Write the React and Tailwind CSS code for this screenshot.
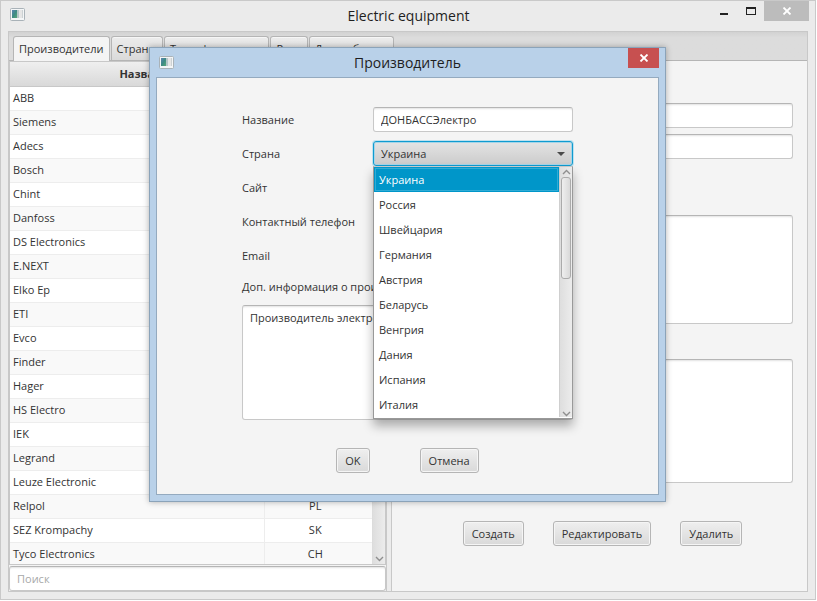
import React from "react";

const TABS = ["Производители", "Страны", "Трансформаторы", "Реле", "Доп. таблицы"];

const MAKERS = [
  ["ABB", "CH"],
  ["Siemens", "DE"],
  ["Adecs", "UA"],
  ["Bosch", "DE"],
  ["Chint", "CN"],
  ["Danfoss", "DK"],
  ["DS Electronics", "UA"],
  ["E.NEXT", "UA"],
  ["Elko Ep", "CZ"],
  ["ETI", "SI"],
  ["Evco", "IT"],
  ["Finder", "IT"],
  ["Hager", "DE"],
  ["HS Electro", "UA"],
  ["IEK", "RU"],
  ["Legrand", "FR"],
  ["Leuze Electronic", "DE"],
  ["Relpol", "PL"],
  ["SEZ Krompachy", "SK"],
  ["Tyco Electronics", "CH"],
];

const COUNTRIES = [
  "Украина",
  "Россия",
  "Швейцария",
  "Германия",
  "Австрия",
  "Беларусь",
  "Венгрия",
  "Дания",
  "Испания",
  "Италия",
];

const FIELD =
  "block w-full rounded-[3px] border border-[#c8c8c8] border-t-[#b5b5b5] bg-white px-[7px] shadow-[inset_0_2px_2px_-1px_#e2e2e2] outline-none placeholder:text-[#a8a8a8]";

function AppIcon() {
  return (
    <svg width="16" height="14" viewBox="0 0 16 14" className="block" aria-hidden="true">
      <defs>
        <linearGradient id="pane" x1="0" y1="0" x2="1" y2="1">
          <stop offset="0" stopColor="#5d84b4" />
          <stop offset="0.5" stopColor="#3d8a84" />
          <stop offset="1" stopColor="#58a878" />
        </linearGradient>
      </defs>
      <rect x="0.5" y="0.5" width="14" height="12" rx="1" fill="#f4f6f7" stroke="#a9b2b8" />
      <rect x="2" y="2" width="5" height="8" fill="url(#pane)" />
      <rect x="7" y="2" width="2" height="8" fill="#b4c6c8" />
      <rect x="9" y="2" width="3" height="8" fill="#e6e6e6" />
      <rect x="12" y="2" width="1" height="8" fill="#ccd2d4" />
    </svg>
  );
}

function CloseGlyph() {
  return (
    <svg width="10" height="8" viewBox="0 0 10 8" aria-hidden="true">
      <path d="M1.5 0.5 L8.5 7.5 M8.5 0.5 L1.5 7.5" stroke="#fff" strokeWidth="1.8" fill="none" />
    </svg>
  );
}

function Chevron({ up }) {
  return (
    <svg width="9" height="6" viewBox="0 0 9 6" className="shrink-0" aria-hidden="true">
      <path d={up ? "M1 5 L4.5 1.5 L8 5" : "M1 1 L4.5 4.5 L8 1"} stroke="#8f8f8f" strokeWidth="1.4" fill="none" />
    </svg>
  );
}

function PushButton({ children }) {
  return (
    <button
      type="button"
      className="h-[25px] rounded-[3px] border border-[#b5b5b5] bg-linear-to-b from-[#efefef] to-[#d9d9d9] px-2 whitespace-nowrap shadow-[inset_0_0_0_1px_#f5f5f5]"
    >
      {children}
    </button>
  );
}

function TabStrip() {
  return (
    <div
      role="tablist"
      className="flex h-[29px] shrink-0 items-end gap-px border-b border-[#b5b5b5] bg-linear-to-b from-[#d2d2d2] via-[#dcdcdc] via-20% to-[#dcdcdc] pl-[4px]"
    >
      {TABS.map((tab, i) => (
        <button
          key={tab}
          type="button"
          role="tab"
          aria-selected={i === 0}
          className={
            i === 0
              ? "-mb-px h-[25px] rounded-t-[3px] border border-b-0 border-[#b5b5b5] bg-[#f4f4f4] px-[5px] whitespace-nowrap"
              : "h-[24px] rounded-t-[3px] border border-b-0 border-[#b5b5b5] bg-linear-to-b from-[#ececec] to-[#dadada] px-[5px] whitespace-nowrap shadow-[inset_0_1px_0_#f6f6f6]"
          }
        >
          {tab}
        </button>
      ))}
    </div>
  );
}

function MakersTable() {
  return (
    <div className="flex min-h-0 flex-1 overflow-hidden border border-[#c8c8c8] bg-white">
      <div className="min-w-0 flex-1 overflow-hidden">
        <table className="w-full table-fixed border-collapse">
          <thead>
            <tr className="h-[24px] bg-linear-to-b from-[#efefef] to-[#d9d9d9]">
              <th className="border-r border-b border-[#c8c8c8] p-0 font-bold">Назва</th>
              <th className="w-[108px] border-b border-[#c8c8c8] p-0 font-bold">Код</th>
            </tr>
          </thead>
          <tbody>
            {MAKERS.map(([name, code]) => (
              <tr key={name} className="h-[24px] odd:bg-white even:bg-[#f9f9f9]">
                <td className="border-r border-b border-[#ededed] px-[3px] py-0">{name}</td>
                <td className="border-b border-[#ededed] py-0 pr-[6px] pl-0 text-center">{code}</td>
              </tr>
            ))}
          </tbody>
        </table>
      </div>
      <div className="flex w-[13px] shrink-0 flex-col items-center justify-between border-l border-[#dcdcdc] bg-linear-to-r from-[#dedede] to-[#ececec] py-[2px]">
        <Chevron up />
        <Chevron />
      </div>
    </div>
  );
}

function DetailPane() {
  return (
    <form className="flex min-w-0 flex-1 flex-col border-l border-[#c8c8c8] bg-[#f4f4f4] pt-[42px] pr-[14px] pl-[20px]">
      <div className="grid grid-cols-[120px_1fr] items-center gap-y-[6px]">
        <label htmlFor="d-site">Сайт</label>
        <input id="d-site" className={`${FIELD} h-[25px]`} />
        <label htmlFor="d-mail">Email</label>
        <input id="d-mail" className={`${FIELD} h-[25px]`} />
      </div>
      <label htmlFor="d-phone" className="mt-[32px] mb-[8px] leading-4">Телефон</label>
      <textarea id="d-phone" className={`${FIELD} h-[109px] resize-none`} />
      <label htmlFor="d-info" className="mt-[11px] mb-[8px] leading-4">Инфо</label>
      <textarea id="d-info" className={`${FIELD} h-[124px] resize-none`} />
      <div className="mt-[38px] flex justify-center gap-[29px]">
        <PushButton>Создать</PushButton>
        <PushButton>Редактировать</PushButton>
        <PushButton>Удалить</PushButton>
      </div>
    </form>
  );
}

function CountryPicker() {
  return (
    <div className="relative">
      <select
        id="f-country"
        defaultValue="Украина"
        className="block h-[25px] w-full appearance-none rounded-[3px] border border-[#0f9bd0] bg-linear-to-b from-[#e4e4e4] to-[#cbcbcb] px-[7px] shadow-[0_0_0_1px_#bfe2ef,inset_0_0_0_1px_#a5d5e8] outline-none"
      >
        {COUNTRIES.map((c) => (
          <option key={c}>{c}</option>
        ))}
      </select>
      <svg className="pointer-events-none absolute top-[11px] right-[8px]" width="8" height="4" viewBox="0 0 8 4" aria-hidden="true">
        <path d="M0 0 H8 L4 4 Z" fill="#4a4a4a" />
      </svg>
      <div className="absolute top-full left-0 z-10 flex w-full border border-[#999] border-t-[#c8c8c8] bg-white pb-px shadow-[0_7px_10px_rgba(0,0,0,0.3)]">
        <ul role="listbox" aria-label="Страна" className="flex-1">
          {COUNTRIES.map((c, i) => (
            <li
              key={c}
              role="option"
              aria-selected={i === 0}
              className={
                i === 0
                  ? "h-[25px] bg-[#0096c9] px-[5px] leading-[25px] text-white shadow-[inset_0_0_0_1px_#0096c9,inset_0_0_0_2px_#30abd5]"
                  : "h-[25px] px-[5px] leading-[25px]"
              }
            >
              {c}
            </li>
          ))}
        </ul>
        <div className="flex w-[13px] flex-col items-center justify-between border-l border-[#cfcfcf] bg-linear-to-r from-[#dedede] to-[#ececec] pt-[2px]">
          <div className="flex flex-col items-center gap-[2px]">
            <Chevron up />
            <div className="h-[102px] w-[10px] rounded-[3px] border border-[#ababab] bg-linear-to-r from-[#efefef] to-[#d9d9d9]" />
          </div>
          <Chevron />
        </div>
      </div>
    </div>
  );
}

function MakerDialog() {
  return (
    <section
      role="dialog"
      aria-label="Производитель"
      className="absolute top-[46px] left-[148px] w-[517px] border border-[#8ba3b9] bg-[#b9d1e9] px-[6px] pb-[6px] shadow-[0_0_6px_rgba(0,0,0,0.3)]"
    >
      <header className="grid h-[29px] grid-cols-[48px_1fr_48px] items-center">
        <span className="pl-[3px]"><AppIcon /></span>
        <h2 className="text-center text-[14px] leading-5 text-[#1e1e1e]">Производитель</h2>
        <button
          type="button"
          aria-label="Закрыть"
          className="flex h-[20px] w-[31px] items-center justify-center self-start justify-self-end bg-[#c75050]"
        >
          <CloseGlyph />
        </button>
      </header>
      <form className="flex flex-col border border-[#94aabf] bg-[#f4f4f4] px-[85px] pt-[29px] pb-[21px]">
        <div className="grid grid-cols-[131px_200px] items-center gap-y-[9px]">
          <label htmlFor="f-name">Название</label>
          <input id="f-name" defaultValue="ДОНБАССЭлектро" className={`${FIELD} h-[25px]`} />
          <label htmlFor="f-country">Страна</label>
          <CountryPicker />
          <label htmlFor="f-site">Сайт</label>
          <input id="f-site" className={`${FIELD} h-[25px]`} />
          <label htmlFor="f-phone">Контактный телефон</label>
          <input id="f-phone" className={`${FIELD} h-[25px]`} />
          <label htmlFor="f-mail">Email</label>
          <input id="f-mail" className={`${FIELD} h-[25px]`} />
        </div>
        <label htmlFor="f-info" className="mt-[11px] mb-[10px] leading-4">
          Доп. информация о производителе
        </label>
        <textarea
          id="f-info"
          defaultValue="Производитель электрооборудования"
          className={`${FIELD} h-[115px] resize-none pt-[4px] leading-4`}
        />
        <div className="mt-[28px] flex justify-center gap-[50px]">
          <PushButton>OK</PushButton>
          <PushButton>Отмена</PushButton>
        </div>
      </form>
    </section>
  );
}

export default function App() {
  return (
    <div className="h-screen bg-white pr-px pb-px font-['Open_Sans','Noto_Sans',sans-serif] text-[11px] leading-4 text-[#333]">
      <main className="relative flex h-full flex-col border border-[#c9c9c9] bg-[#ebebeb] px-[7px] pb-[7px]">
        <header className="-mr-px grid h-[30px] shrink-0 grid-cols-[110px_1fr_110px] items-center">
          <span className="pb-[2px] pl-[2px]"><AppIcon /></span>
          <h1 className="text-center text-[14px] leading-5 text-[#1e1e1e]">Electric equipment</h1>
          <div className="flex h-full items-start justify-end">
            <button type="button" aria-label="Свернуть" className="flex h-[20px] w-[27px] items-center justify-center pt-[5px]">
              <span className="block h-[2px] w-[8px] bg-[#222]" />
            </button>
            <button type="button" aria-label="Развернуть" className="flex h-[20px] w-[27px] items-center justify-center">
              <span className="block h-[8px] w-[10px] border border-t-2 border-[#222]" />
            </button>
            <button type="button" aria-label="Закрыть" className="flex h-[20px] w-[45px] items-center justify-center bg-[#bcbcbc]">
              <CloseGlyph />
            </button>
          </div>
        </header>
        <div className="flex min-h-0 flex-1 flex-col border border-[#c8c8c8] bg-[#f4f4f4]">
          <TabStrip />
          <div className="flex min-h-0 flex-1">
            <div className="flex w-[378px] shrink-0 flex-col border-r border-[#c8c8c8]">
              <MakersTable />
              <input type="search" aria-label="Поиск" placeholder="Поиск" className={`${FIELD} mt-px h-[25px] shrink-0`} />
            </div>
            <div className="w-[4px] shrink-0 bg-[#ececec]" />
            <DetailPane />
          </div>
        </div>
        <MakerDialog />
      </main>
    </div>
  );
}
